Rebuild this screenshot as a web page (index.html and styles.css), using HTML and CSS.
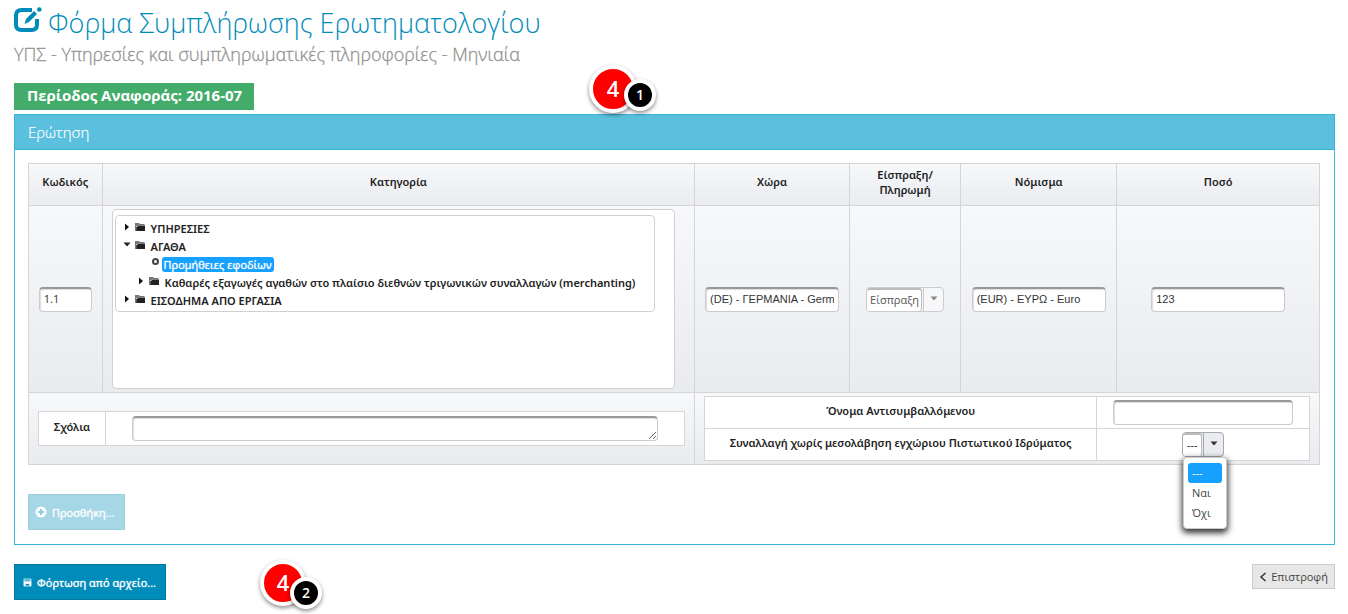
FILE: index.html
```html
<!DOCTYPE html>
<html lang="el">
<head>
<meta charset="utf-8">
<title>Φόρμα Συμπλήρωσης Ερωτηματολογίου</title>
<link rel="stylesheet" href="styles.css">
</head>
<body>
<svg class="defs" width="0" height="0" aria-hidden="true">
  <symbol id="folder" viewBox="0 0 10 8">
    <path d="M0 8V0h4l1 1h4.500v1.200H4.200L1 3.500V8z" fill="#777"/>
    <path d="M1.200 8V4.200L4 2.600h6V8z" fill="#222"/>
  </symbol>
  <symbol id="right" viewBox="0 0 8 8"><path d="M2 0.500L6 4L2 7.500z" fill="#111"/></symbol>
  <symbol id="down" viewBox="0 0 8 8"><path d="M0.500 1.500h7L4 5.500z" fill="currentColor"/></symbol>
</svg>
<div class="page">
  <header class="head">
    <h1 class="title">
      <svg class="title-icon" viewBox="0 0 28 28" aria-hidden="true">
        <path d="M18 3H7.500Q2 3 2 8.500v9q0 5.500 5.500 5.500h10q5.500 0 5.500-5.500V12" fill="none" stroke="#008cba" stroke-width="4"/>
        <path d="M10.500 17l1.500-5L20 4l3 3-8 8z" fill="#008cba"/>
        <circle cx="25.300" cy="2.500" r="2.300" fill="#008cba"/>
      </svg>
      <span>Φόρμα Συμπλήρωσης Ερωτηματολογίου</span>
    </h1>
    <h2 class="subtitle">ΥΠΣ - Υπηρεσίες και συμπληρωματικές πληροφορίες - Μηνιαία</h2>
    <span class="period">Περίοδος Αναφοράς: 2016-07</span>
    <div class="marker marker-top"><span class="marker-main">4</span><span class="marker-sub">1</span></div>
  </header>

  <section class="panel">
    <h3 class="panel-title">Ερώτηση</h3>
    <div class="panel-body">
      <table class="grid">
        <colgroup><col class="c-code"><col class="c-cat"><col class="c-country"><col class="c-dir"><col class="c-cur"><col class="c-amount"></colgroup>
        <thead>
          <tr><th>Κωδικός</th><th>Κατηγορία</th><th>Χώρα</th><th>Είσπραξη/<br>Πληρωμή</th><th>Νόμισμα</th><th>Ποσό</th></tr>
        </thead>
        <tbody>
          <tr class="entry">
            <td><input class="field field-code" type="text" value="1.1" aria-label="Κωδικός"></td>
            <td class="tree-cell">
              <div class="tree-box">
                <ul class="tree">
                  <li><svg class="arrow"><use href="#right"/></svg><svg class="folder"><use href="#folder"/></svg><span>ΥΠΗΡΕΣΙΕΣ</span></li>
                  <li><svg class="arrow"><use href="#down"/></svg><svg class="folder"><use href="#folder"/></svg><span>ΑΓΑΘΑ</span></li>
                  <li class="leaf"><i class="dot"></i><span class="selected">Προμήθειες εφοδίων</span></li>
                  <li class="nested"><svg class="arrow"><use href="#right"/></svg><svg class="folder"><use href="#folder"/></svg><span>Καθαρές εξαγωγές αγαθών στο πλαίσιο διεθνών τριγωνικών συναλλαγών (merchanting)</span></li>
                  <li><svg class="arrow"><use href="#right"/></svg><svg class="folder"><use href="#folder"/></svg><span>ΕΙΣΟΔΗΜΑ ΑΠΟ ΕΡΓΑΣΙΑ</span></li>
                </ul>
              </div>
            </td>
            <td><input class="field field-std" type="text" value="(DE) - ΓΕΡΜΑΝΙΑ - Germ" aria-label="Χώρα"></td>
            <td>
              <div class="combo combo-off">
                <select class="combo-value" aria-label="Είσπραξη/Πληρωμή"><option>Είσπραξη</option><option>Πληρωμή</option></select>
                <span class="combo-arrow"><svg class="arrow"><use href="#down"/></svg></span>
              </div>
            </td>
            <td><input class="field field-std" type="text" value="(EUR) - ΕΥΡΩ - Euro" aria-label="Νόμισμα"></td>
            <td><input class="field field-std" type="text" value="123" aria-label="Ποσό"></td>
          </tr>
          <tr class="extra">
            <td colspan="2">
              <table class="sub sub-notes">
                <tr><th class="sub-note"><label for="notes">Σχόλια</label></th><td><textarea class="field notes" id="notes" rows="1"></textarea></td></tr>
              </table>
            </td>
            <td colspan="4">
              <table class="sub">
                <tr><th><label for="party">Όνομα Αντισυμβαλλόμενου</label></th><td class="sub-value"><input class="field party" id="party" type="text"></td></tr>
                <tr>
                  <th><label for="direct">Συναλλαγή χωρίς μεσολάβηση εγχώριου Πιστωτικού Ιδρύματος</label></th>
                  <td class="sub-value">
                    <div class="combo combo-open">
                      <select class="combo-value" id="direct"><option>---</option><option>Ναι</option><option>Όχι</option></select>
                      <span class="combo-arrow"><svg class="arrow"><use href="#down"/></svg></span>
                      <ul class="menu"><li class="menu-on">---</li><li>Ναι</li><li>Όχι</li></ul>
                    </div>
                  </td>
                </tr>
              </table>
            </td>
          </tr>
        </tbody>
      </table>
      <button class="btn btn-add" type="button" disabled>
        <svg class="btn-icon" viewBox="0 0 12 12" aria-hidden="true"><circle cx="6" cy="6" r="5.500" fill="#fff"/><path d="M6 3v6M3 6h6" stroke="#8fcfe3" stroke-width="2"/></svg>
        <span>Προσθήκη...</span>
      </button>
    </div>
  </section>

  <footer class="foot">
    <button class="btn btn-load" type="button">
      <svg class="load-icon" viewBox="0 0 10 10" aria-hidden="true"><rect x="0.500" y="0.500" width="9" height="9" rx="1.500" fill="#b8e0ee"/><path d="M2 1h6v3H2z" fill="#63b6d3"/><path d="M1 4h8v5H1z" fill="#fff"/><path d="M3 6.500h4v2H3z" fill="#1887b3"/></svg>
      <span>Φόρτωση από αρχείο...</span>
    </button>
    <button class="btn btn-back" type="button">
      <svg class="back-icon" viewBox="0 0 8 10" aria-hidden="true"><path d="M6.500 1L2 5l4.500 4" fill="none" stroke="#333" stroke-width="1.500"/></svg>
      <span>Επιστροφή</span>
    </button>
    <div class="marker marker-bottom"><span class="marker-main">4</span><span class="marker-sub">2</span></div>
  </footer>
</div>
</body>
</html>
```
FILE: styles.css
```css
* { box-sizing: border-box; }
body { margin: 0; background: #fff; color: #222; font-family: "Open Sans", "Noto Sans", sans-serif; font-size: 11px; }
.defs { position: absolute; }
.page { min-height: 100vh; padding: 4px 13px 0 14px; }
h1, h2, h3, ul { margin: 0; padding: 0; font-weight: 400; }
ul { list-style: none; }
button, input, select, textarea { font: inherit; margin: 0; }

.head { position: relative; display: flex; flex-direction: column; align-items: flex-start; }
.title { display: flex; align-items: flex-start; gap: 6px; color: #008cba; font-size: 27px; font-weight: 300; line-height: 37px; }
.title-icon { width: 28px; height: 28px; margin-top: 3px; }
.subtitle { color: #8c8c8c; font-size: 18px; font-weight: 300; line-height: 26px; -webkit-text-stroke: 0.3px #999; }
.period { margin: 16px 0 4px; padding: 0 12px 2px 13px; background: #43ac6a; color: #fff; font-size: 15px; font-weight: 700; line-height: 25px; }

.panel { border: 1px solid #39b3d7; }
.panel-title { padding: 0 13px; border-bottom: 1px solid #39b3d7; background: #5bc0de; color: #fff; font-size: 15px; font-weight: 300; line-height: 34px; -webkit-text-stroke: 0.2px #fff; }
.panel-body { padding: 13px 14px 14px 13px; }

.grid, .sub { width: 100%; border-collapse: collapse; table-layout: fixed; }
.grid th, .grid td { border: 1px solid #d5d5d5; padding: 0; text-align: center; }
.grid th { font-family: "Noto Sans", "Open Sans", sans-serif; font-weight: 600; line-height: 15px; }
.c-code { width: 5.7%; }
.c-cat { width: 45.9%; }
.c-country { width: 12%; }
.c-dir { width: 8.6%; }
.c-cur { width: 12.1%; }
.c-amount { width: 15.7%; }
.grid thead tr { height: 42px; background: linear-gradient(#f7f8fa, #eaebef); }
.grid thead th { padding-bottom: 6px; }
.entry { height: 187px; background: linear-gradient(#f7f8fa, #eaebef); }
.extra { height: 72px; background: linear-gradient(#f7f8fa, #eaebef); }
.grid .extra > td { padding: 0 9px; }
.sub { background: #fff; }
.sub tr { height: 32px; }
.sub-notes tr { height: 34px; }
.grid .sub th { padding-bottom: 5px; }
.grid .sub-note { width: 67px; }
.sub-value { width: 213px; }

.field { height: 25px; padding: 0 4px 2px; border: 1px solid #ccc; border-top: 2px solid #999; border-radius: 4px; background: #fff; color: #333; font-family: "Liberation Sans", Arial, sans-serif; font-size: 11px; vertical-align: middle; box-shadow: inset 1px 1px 1px #ddd; }
.field-code { width: 53px; font-family: "Open Sans", sans-serif; }
.field-std { width: 134px; }
.notes { width: 526px; resize: both; }
.party { width: 180px; }

.grid .tree-cell { padding: 3px 19px 3px 9px; }
.tree-box { height: 180px; padding: 5px 2px; border: 1px solid #d0d0d0; border-radius: 4px; background: #fff; }
.tree { width: 540px; padding: 3px 6px 2px 7px; border: 1px solid #d0d0d0; border-radius: 4px; font-family: "Noto Sans", "Open Sans", sans-serif; font-weight: 600; text-align: left; white-space: nowrap; }
.tree li { display: flex; align-items: center; height: 18px; }
.arrow { width: 8px; height: 8px; }
.tree .arrow { margin: 0 4px 3px 0; }
.folder { width: 10px; height: 8px; margin: 0 6px 3px 0; }
.tree .nested { padding-left: 14px; }
.tree .leaf { padding-left: 29px; }
.dot { width: 7px; height: 7px; margin: 0 3px 5px 0; border: 2px solid #444; border-radius: 50%; }
.selected { padding: 0 2px; border-radius: 3px; background: #16a1ff; color: #fff; font-family: "Open Sans", sans-serif; font-weight: 400; line-height: 15px; text-shadow: 0 0 1px #fff; }

.combo { position: relative; display: inline-flex; height: 25px; border: 1px solid #ccc; border-radius: 4px; background: #f6f7f9; vertical-align: middle; text-align: left; }
.combo-value { appearance: none; width: 55px; padding: 0 2px 2px 3px; border: 0 solid #bbb; border-width: 2px 1px 0 0; border-radius: 3px; background: #fff; color: #555; outline: none; }
.combo-arrow { display: flex; align-items: center; justify-content: center; width: 20px; margin-left: 1px; padding-bottom: 1px; border-left: 1px solid #ccc; color: #333; }
.combo-off .combo-arrow { color: #888; }
.combo-open { border-color: #a8a8b0; background: #ebecf0; }
.combo-open .combo-value { width: 19px; padding-left: 4px; color: #222; }
.combo-open .combo-arrow { border-color: #a8a8b0; }
.menu { position: absolute; z-index: 2; top: 24px; left: 0; width: 44px; padding: 5px 4px; border: 1px solid #ccc; border-radius: 4px; background: #fff; color: #444; box-shadow: 0 3px 6px 1px rgba(0, 0, 0, 0.8); }
.menu li { height: 20px; padding: 0 4px; border-radius: 3px; line-height: 19px; }
.menu .menu-on { background: #16a1ff; color: #fff; }

.btn { display: flex; align-items: center; border: 1px solid #0079a1; color: #fff; font-size: 11px; line-height: 15px; }
.btn-add { height: 36px; margin-top: 29px; padding: 0 10px 0 6px; gap: 5px; border-color: #9fcfdf; background: #a6d7e7; text-shadow: 0 0 1px #fff; }
.btn-icon { width: 12px; height: 12px; }
.foot { position: relative; display: flex; justify-content: space-between; align-items: flex-start; padding-top: 19px; }
.btn-load { height: 36px; padding: 0 9px 0 8px; gap: 5px; background: #008cba; text-shadow: 0 0 1px #fff; }
.load-icon { width: 9px; height: 9px; }
.btn-back { height: 25px; padding: 0 6px; gap: 4px; border-color: #ccc; background: #e7e7e7; color: #444; font-weight: 400; }
.back-icon { width: 8px; height: 10px; }

.marker { position: absolute; display: flex; color: #fff; line-height: 20px; }
.marker-top { top: 61px; left: 575px; }
.marker-bottom { top: 15px; left: 246px; }
.marker-main, .marker-sub { display: flex; align-items: center; justify-content: center; border: 4px solid #fff; border-radius: 50%; box-shadow: 0 2px 4px rgba(0, 0, 0, 0.45); }
.marker-main { width: 48px; height: 48px; padding-bottom: 2px; background: #f00; font-size: 22px; font-weight: 600; }
.marker-sub { width: 32px; height: 32px; margin: 14px 0 0 -13px; background: #000; font-size: 14px; font-weight: 600; }
.marker-bottom .marker-main { width: 46px; height: 46px; }
.marker-bottom .marker-sub { margin: 17px 0 0 -16px; }
```
